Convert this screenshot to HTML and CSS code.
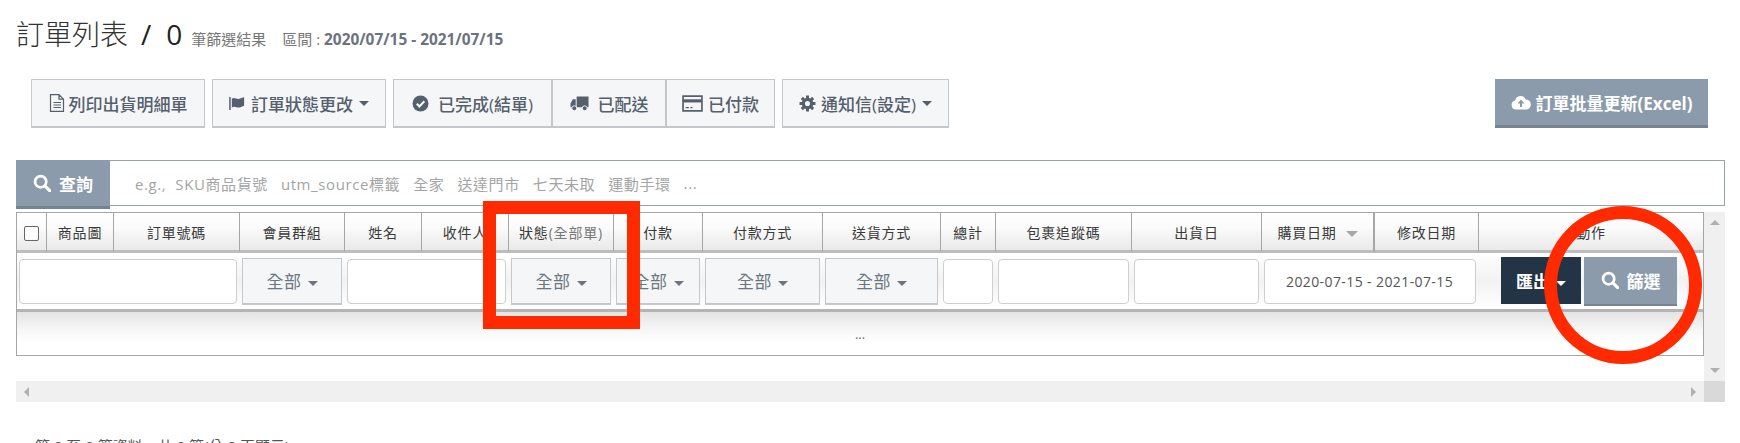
FILE: index.html
```html
<!DOCTYPE html>
<html lang="zh-Hant">
<head>
<meta charset="utf-8">
<title>訂單列表</title>
<link rel="stylesheet" href="styles.css">
</head>
<body>
<svg class="defs" width="0" height="0" aria-hidden="true">
  <symbol id="i-search" viewBox="0 0 16 16"><circle cx="6.800" cy="6.800" r="5" fill="none" stroke="currentColor" stroke-width="2.400"/><path d="M10.600 10.600 15 15" stroke="currentColor" stroke-width="2.800" stroke-linecap="round"/></symbol>
</svg>
<h1 class="title">訂單列表<span class="slash">/</span><span class="count">0</span><small class="sub">筆篩選結果</small><small class="range">區間 : <b>2020/07/15 - 2021/07/15</b></small></h1>

<div class="toolbar">
  <button class="btn btn-wide"><svg class="ic ic-doc" viewBox="0 0 16 18"><path d="M1.500 .7h8.500l4.500 4.500v12.100h-13zM10 .7v4.500h4.500M4.500 8.500h7.500M4.500 11h7.500M4.500 13.500h7.500" fill="none" stroke="currentColor" stroke-width="1.200"/></svg>列印出貨明細單</button>
  <button class="btn btn-wide"><svg class="ic" viewBox="0 0 18 16"><path d="M1 1v14" stroke="currentColor" stroke-width="1.600"/><path d="M3 3c3-2 5 1 8 0 2-.6 3-1 5-1.500v9c-2 .5-3 1.500-5 1.800-3 .4-5-2-8 0z" fill="currentColor"/></svg>訂單狀態更改<i class="caret"></i></button>
  <div class="group">
    <button class="btn btn-done"><svg class="ic" viewBox="0 0 16 16"><circle cx="8" cy="8" r="7.500" fill="currentColor"/><path d="M4.500 8.200 7 10.700l4.600-4.800" fill="none" stroke="#f4f6f8" stroke-width="2"/></svg>已完成(結單)</button>
    <button class="btn btn-ship"><svg class="ic ic-truck" viewBox="0 0 20 16"><path d="M7 .5h12.500v11.500H7zM6 3.500V12H.5V8l2.500-4.500z" fill="currentColor"/><circle cx="4.500" cy="13" r="2.600" fill="currentColor" stroke="#f4f6f8"/><circle cx="15.500" cy="13" r="2.600" fill="currentColor" stroke="#f4f6f8"/></svg>已配送</button>
    <button class="btn btn-paid"><svg class="ic ic-card" viewBox="0 0 20 16"><path d="M1 1h18v14H1z" fill="none" stroke="currentColor" stroke-width="1.600"/><path d="M1 4h18v3H1z" fill="currentColor"/><path d="M3.500 12h3M8 12h2" stroke="currentColor" stroke-width="1.200"/></svg>已付款</button>
  </div>
  <button class="btn btn-mail"><svg class="ic" viewBox="0 0 16 16"><circle cx="8" cy="8" r="3.900" fill="none" stroke="currentColor" stroke-width="3"/><path d="M8 .5v3M8 12.500v3M.5 8h3M12.500 8h3M2.700 2.700l2.100 2.100M11.200 11.200l2.100 2.100M2.700 13.300l2.100-2.100M11.200 4.800l2.100-2.100" stroke="currentColor" stroke-width="2.800"/></svg>通知信(設定)<i class="caret"></i></button>
  <button class="btn btn-excel"><svg class="ic ic-cloud" viewBox="0 0 20 14"><path d="M5 14a4.500 4.500 0 0 1-.8-8.900A5.500 5.500 0 0 1 14.700 4 5 5 0 0 1 15 14z" fill="currentColor"/><path d="M10 4 6.500 8H9v3.500h2V8h2.500z" fill="#8c9bab"/></svg>訂單批量更新(Excel)</button>
</div>

<div class="search">
  <button class="btn-gray btn-query"><svg class="ic-s"><use href="#i-search"/></svg>查詢</button>
  <div class="hints"><span>e.g.,&nbsp; SKU商品貨號</span><span>utm_source標籤</span><span>全家</span><span>送達門市</span><span>七天未取</span><span>運動手環</span><span>...</span></div>
</div>

<div class="grid-wrap">
  <div class="grid-main">
    <div class="table-box">
      <table class="orders">
        <colgroup>
          <col class="c1"><col class="c2"><col class="c3"><col class="c4"><col class="c5"><col class="c6"><col class="c7"><col class="c8"><col class="c9"><col class="c10"><col class="c11"><col class="c12"><col class="c13"><col class="c14"><col class="c15"><col class="c16">
        </colgroup>
        <thead>
          <tr class="head">
            <th><span class="check"></span></th><th>商品圖</th><th>訂單號碼</th><th>會員群組</th><th>姓名</th><th>收件人</th><th>狀態<em>(全部單)</em></th><th>付款</th><th>付款方式</th><th>送貨方式</th><th>總計</th><th>包裹追蹤碼</th><th>出貨日</th><th class="sorted">購買日期<i class="sort"></i></th><th>修改日期</th><th>動作</th>
          </tr>
          <tr class="filters">
            <td colspan="3"><div class="field"></div></td>
            <td><button class="pick">全部<i class="caret"></i></button></td>
            <td colspan="2"><div class="field"></div></td>
            <td><button class="pick">全部<i class="caret"></i></button></td>
            <td><button class="pick">全部<i class="caret"></i></button></td>
            <td><button class="pick">全部<i class="caret"></i></button></td>
            <td><button class="pick">全部<i class="caret"></i></button></td>
            <td><div class="field"></div></td>
            <td><div class="field"></div></td>
            <td><div class="field"></div></td>
            <td colspan="2"><div class="field field-date">2020-07-15 - 2021-07-15</div></td>
            <td><div class="actions"><button class="btn-dark">匯出<i class="caret"></i></button><button class="btn-gray btn-filter"><svg class="ic-s"><use href="#i-search"/></svg>篩選</button></div></td>
          </tr>
        </thead>
        <tbody>
          <tr class="empty"><td colspan="16">...</td></tr>
        </tbody>
      </table>
    </div>
    <div class="vbar"><i class="arr arr-up"></i><i class="arr arr-down"></i></div>
  </div>
  <div class="hbar"><i class="arr arr-left"></i><i class="arr arr-right"></i><i class="corner"></i></div>
</div>

<p class="info">第 0 至 0 筆資料，共 0 筆(分 0 頁顯示)</p>

<div class="mark-rect"></div>
<div class="mark-circle"></div>
</body>
</html>
```

FILE: styles.css
```css
* { box-sizing: border-box; }
html, body { margin: 0; height: 443px; overflow: hidden; }
body {
  position: relative;
  background: #fff;
  color: #333;
  font-family: "Open Sans", "Noto Sans CJK TC", sans-serif;
  font-size: 14px;
}
button { font-family: inherit; padding: 0; cursor: pointer; }
.defs { position: absolute; }

.title {
  margin: 18px 0 0 16px;
  height: 32px;
  font-size: 28px;
  line-height: 32px;
  font-weight: 300;
  color: #333;
  display: flex;
  align-items: baseline;
  white-space: nowrap;
}
.slash { margin: 0 15px 0 13px; font-weight: 500; color: #222; }
.count { font-weight: 400; color: #222; }
.sub { font-size: 15px; font-weight: 400; color: #777; margin-left: 9px; }
.range { font-size: 15px; font-weight: 400; color: #777; margin-left: 16px; }
.range b { font-size: 15.400px; font-weight: 700; color: #6b7280; }

.toolbar {
  display: flex;
  margin: 29px 32px 0 31px;
  height: 49px;
}
.btn {
  height: 49px;
  background: #f4f6f8;
  border: 1px solid #c4c8cc;
  border-bottom-width: 2px;
  color: #55606c;
  font-size: 17px;
  font-weight: 500;
  display: flex;
  align-items: center;
  justify-content: center;
  white-space: nowrap;
}
.btn-wide { width: 174px; margin-right: 7px; }
.group { display: flex; margin-right: 7px; }
.btn-done { width: 160px; border-right-width: 2px; }
.btn-ship { width: 114px; border-left: 0; border-right-width: 2px; }
.btn-paid { width: 108px; border-left: 0; }
.btn-mail { width: 167px; }
.btn-excel {
  width: 213px;
  margin-left: auto;
  background: #8c9bab;
  border: 0;
  border-bottom: 3px solid #77848f;
  color: #fff;
  font-weight: 700;
}
.ic { width: 17px; height: 17px; margin-right: 5px; flex: none; }
.ic-doc { width: 16px; height: 18px; margin-right: 4px; }
.btn-done .ic { margin-right: 9px; }
.ic-truck { width: 19px; margin-right: 9px; }
.ic-card { width: 21px; }
.btn-excel .ic { width: 20px; }
.caret {
  display: inline-block;
  width: 0;
  height: 0;
  margin-left: 6px;
  border-top: 5px solid currentColor;
  border-left: 5px solid transparent;
  border-right: 5px solid transparent;
}

.search {
  display: flex;
  align-items: flex-start;
  margin: 32px 15px 0 16px;
  height: 49px;
}
.btn-gray {
  background: #8c9bab;
  border: 0;
  border-bottom: 2px solid #77848f;
  color: #fff;
  font-size: 17px;
  font-weight: 700;
  display: flex;
  align-items: center;
  justify-content: center;
}
.btn-query { width: 94px; height: 49px; border-bottom-width: 3px; flex: none; }
.ic-s { width: 18px; height: 18px; margin-right: 8px; }
.hints {
  flex: 1;
  height: 46px;
  border: 1px solid #9aa3ad;
  border-left: 0;
  display: flex;
  align-items: center;
  gap: 13px;
  padding-left: 25px;
  color: #a4a4a4;
  font-size: 15px;
  letter-spacing: .6px;
  white-space: nowrap;
}

.grid-wrap { margin: 3px 15px 0 16px; }
.grid-main { display: flex; height: 169px; }
.table-box { width: 1688px; flex: none; }
.vbar { flex: 1; background: #f0f0f0; position: relative; }
.hbar { height: 21px; background: #f0f0f0; position: relative; }
.corner { position: absolute; right: 0; top: 0; width: 21px; height: 21px; background: #d9d9d9; }
.arr { position: absolute; width: 0; height: 0; }
.arr-up { left: 6px; top: 8px; border-left: 5px solid transparent; border-right: 5px solid transparent; border-bottom: 5px solid #b0b0b0; }
.arr-down { left: 6px; bottom: 8px; border-left: 5px solid transparent; border-right: 5px solid transparent; border-top: 5px solid #b0b0b0; }
.arr-left { left: 8px; top: 6px; border-top: 5px solid transparent; border-bottom: 5px solid transparent; border-right: 5px solid #b0b0b0; }
.arr-right { right: 29px; top: 6px; border-top: 5px solid transparent; border-bottom: 5px solid transparent; border-left: 5px solid #b0b0b0; }

.orders {
  table-layout: fixed;
  width: 1688px;
  border-collapse: separate;
  border-spacing: 0;
  border: 1px solid #a6a6a6;
}
.c1 { width: 30px; } .c2 { width: 67px; } .c3 { width: 126px; } .c4 { width: 105px; }
.c5 { width: 77px; } .c6 { width: 87px; } .c7 { width: 105px; } .c8 { width: 89px; }
.c9 { width: 120px; } .c10 { width: 118px; } .c11 { width: 55px; } .c12 { width: 136px; }
.c13 { width: 130px; } .c14 { width: 113px; } .c15 { width: 104px; } .c16 { width: 224px; }

.head th {
  height: 40px;
  padding: 0;
  background: linear-gradient(#fff, #fbfbfb 40%, #e9e9e9);
  border-right: 1px solid #a6a6a6;
  border-bottom: 3px solid #bdbdbd;
  color: #3a3a3a;
  font-size: 14px;
  font-weight: 400;
  letter-spacing: .8px;
  white-space: nowrap;
}
.head th:last-child { border-right: 0; }
.head th.sorted { border-right-width: 2px; }
.head em { font-style: normal; color: #777; }
.check {
  display: inline-block;
  width: 15px;
  height: 15px;
  vertical-align: middle;
  background: #fff;
  border: 1px solid #666;
  border-radius: 2px;
}
.sort {
  display: inline-block;
  margin-left: 9px;
  vertical-align: middle;
  border-top: 6px solid #a8a8a8;
  border-left: 6px solid transparent;
  border-right: 6px solid transparent;
}

.filters td {
  height: 59px;
  padding: 0 3px 0 2px;
  background: linear-gradient(#fff, #f2f2f2 50%, #fff);
  border-bottom: 3px solid #b4b4b4;
  vertical-align: middle;
}
.field {
  height: 45px;
  background: #fff;
  border: 1px solid #cfcfcf;
  border-radius: 4px;
}
.field-date {
  display: flex;
  align-items: center;
  padding-left: 21px;
  color: #555;
  font-size: 14px;
  letter-spacing: .4px;
}
.pick {
  width: 100%;
  height: 47px;
  background: #f4f6f8;
  border: 1px solid #c4c8cc;
  border-bottom-width: 2px;
  color: #6c7680;
  font-size: 17px;
  letter-spacing: .5px;
}
.pick .caret { vertical-align: 2px; }
.actions { display: flex; justify-content: flex-end; gap: 3px; padding-right: 23px; }
.btn-dark {
  width: 80px;
  height: 47px;
  background: #233446;
  border: 0;
  color: #fff;
  font-size: 17px;
  font-weight: 700;
}
.btn-dark .caret { vertical-align: 2px; }
.btn-filter { width: 93px; height: 49px; }

.empty td {
  height: 43px;
  text-align: center;
  color: #666;
  font-size: 13px;
  background: linear-gradient(#e4e4e4, #f8f8f8 45%, #fff 70%);
}

.info {
  margin: 35px 0 0 35px;
  color: #555;
  font-size: 15px;
  line-height: 18px;
}

.mark-rect {
  position: absolute;
  left: 483px;
  top: 201px;
  width: 157px;
  height: 128px;
  border: 13px solid #ff2a00;
}
.mark-circle {
  position: absolute;
  left: 1544px;
  top: 206px;
  width: 158px;
  height: 158px;
  border: 13px solid #ff2a00;
  border-radius: 50%;
}
```
